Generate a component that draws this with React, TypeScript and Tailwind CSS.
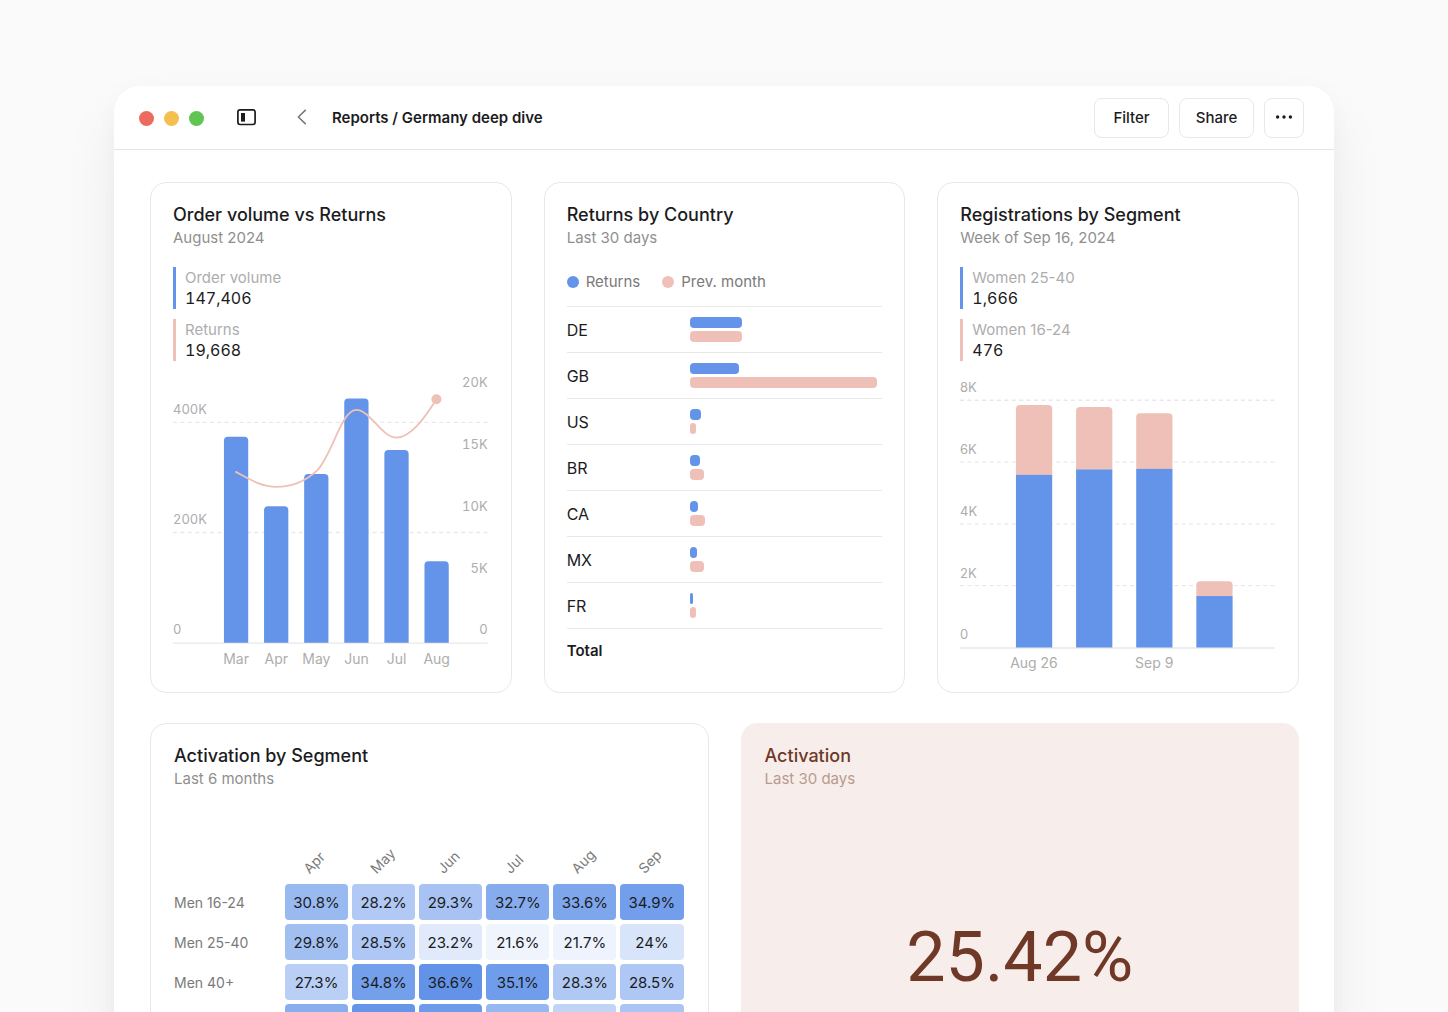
import clsx from 'clsx'
import { PropsWithChildren } from 'react'

const BLUE = '#6494e9'
const PINK = '#eec0b7'

interface ICardProps extends PropsWithChildren {
  title: string
  subtitle: string
  className?: string
  subtitleClassName?: string
}

const Card = ({
  title,
  subtitle,
  className,
  subtitleClassName = 'text-[#8f8f8f]',
  children,
}: ICardProps) => {
  return (
    <section
      className={clsx(
        'flex min-w-0 flex-col rounded-2xl border pt-5',
        className,
      )}
    >
      <h2 className="text-[18px] leading-6 font-medium">{title}</h2>
      <p className={clsx('text-[15px] leading-[22px]', subtitleClassName)}>
        {subtitle}
      </p>
      {children}
    </section>
  )
}

interface IStat {
  label: string
  value: string
  className: string
}

const Stats = ({ items }: { items: IStat[] }) => {
  return (
    <dl className="mt-[18px] flex flex-col gap-2.5">
      {items.map((item) => (
        <div
          key={item.label}
          className={clsx('border-l-[3px] py-px pl-[9px]', item.className)}
        >
          <dt className="text-[15px] leading-5 text-[#adadad]">{item.label}</dt>
          <dd className="text-[16px] leading-5 tabular-nums">{item.value}</dd>
        </div>
      ))}
    </dl>
  )
}

// Bar with rounded top corners, standing on `bottom`
const barPath = (x: number, top: number, width: number, bottom: number) =>
  `M${x} ${bottom}V${top + 4}q0 -4 4 -4h${width - 8}q4 0 4 4V${bottom}z`

const orderBars = [
  { month: 'Mar', top: 66.7 },
  { month: 'Apr', top: 136.3 },
  { month: 'May', top: 104 },
  { month: 'Jun', top: 28.5 },
  { month: 'Jul', top: 80 },
  { month: 'Aug', top: 191.5 },
]

const OrderChart = () => {
  return (
    <svg
      viewBox="0 0 316 300"
      className="mt-[9px] w-full overflow-visible tabular-nums"
      role="img"
      aria-label="Order volume and returns by month"
    >
      <g stroke="#e9e9e9" strokeWidth="1.3">
        <path d="M0 52.5H315M0 162.7H315" strokeDasharray="4 3.4" />
        <path d="M0 273.5H315" />
      </g>
      <g fill="#adadad" fontSize="13">
        <text x="0" y="44">400K</text>
        <text x="0" y="154">200K</text>
        <text x="0" y="264">0</text>
        <g textAnchor="end">
          <text x="315" y="17">20K</text>
          <text x="315" y="79">15K</text>
          <text x="315" y="141">10K</text>
          <text x="315" y="203">5K</text>
          <text x="315" y="264">0</text>
        </g>
      </g>
      {orderBars.map((bar, i) => (
        <g key={bar.month}>
          <path d={barPath(51 + i * 40.15, bar.top, 24.3, 273)} fill={BLUE} />
          <text
            x={63.2 + i * 40.15}
            y="294"
            fontSize="14"
            fill="#adadad"
            textAnchor="middle"
          >
            {bar.month}
          </text>
        </g>
      ))}
      <path
        d="M63 102C76 109 88 117 103.4 117C118 117 132 112 143.5 101.3C159 87 168 40 183.7 40C197 40 209 67.7 223.8 67.7C238 67.7 252 48 263.7 29.3"
        fill="none"
        stroke={PINK}
        strokeWidth="1.8"
        strokeLinecap="round"
      />
      <circle cx="263.7" cy="29.3" r="5" fill={PINK} />
    </svg>
  )
}

const countries = [
  { code: 'DE', returns: 27, previous: 27 },
  { code: 'GB', returns: 25.5, previous: 97 },
  { code: 'US', returns: 6, previous: 3.3 },
  { code: 'BR', returns: 5.3, previous: 7.6 },
  { code: 'CA', returns: 4.3, previous: 7.9 },
  { code: 'MX', returns: 4, previous: 7.6 },
  { code: 'FR', returns: 1.5, previous: 3.3 },
]

const CountryTable = () => {
  return (
    <>
      <ul className="mt-[21px] flex gap-[22px] text-[15px] leading-6 text-[#7a7a7a]">
        <li className="flex items-center gap-[7px]">
          <span className="size-3 rounded-full bg-[#6494e9]" />
          Returns
        </li>
        <li className="flex items-center gap-[7px]">
          <span className="size-3 rounded-full bg-[#eec0b7]" />
          Prev. month
        </li>
      </ul>
      <table className="mt-3 w-full table-fixed text-[16px] leading-6">
        <colgroup>
          <col className="w-[123px]" />
          <col />
        </colgroup>
        <tbody>
          {countries.map((country) => (
            <tr key={country.code} className="h-[46px] border-t border-[#e8e8e8]">
              <th scope="row" className="text-left font-normal">
                {country.code}
              </th>
              <td>
                <div className="flex flex-col gap-[3px]">
                  <div
                    className="h-[11px] rounded bg-[#6494e9]"
                    style={{ width: `${country.returns}%` }}
                  />
                  <div
                    className="h-[11px] rounded bg-[#eec0b7]"
                    style={{ width: `${country.previous}%` }}
                  />
                </div>
              </td>
            </tr>
          ))}
          <tr className="h-11 border-t border-[#e8e8e8]">
            <th scope="row" className="text-left text-[15px] font-semibold">
              Total
            </th>
            <td />
          </tr>
        </tbody>
      </table>
    </>
  )
}

const weeks = [
  { label: 'Aug 26', top: 35, split: 105 },
  { label: '', top: 37, split: 99.5 },
  { label: 'Sep 9', top: 43.3, split: 99 },
  { label: '', top: 211.5, split: 226.3 },
]

const RegistrationsChart = () => {
  return (
    <svg
      viewBox="0 0 316 300"
      className="mt-[9px] w-full overflow-visible"
      role="img"
      aria-label="Registrations by week"
    >
      <g stroke="#e9e9e9" strokeWidth="1.3">
        <path
          d="M0 30.3H315M0 92.2H315M0 154H315M0 215.8H315"
          strokeDasharray="4 3.4"
        />
        <path d="M0 278.3H315" />
      </g>
      <g fill="#adadad" fontSize="13">
        <text x="0" y="22">8K</text>
        <text x="0" y="84">6K</text>
        <text x="0" y="146">4K</text>
        <text x="0" y="208">2K</text>
        <text x="0" y="269">0</text>
      </g>
      {weeks.map((week, i) => (
        <g key={i}>
          <path
            d={barPath(56 + i * 60.2, week.top, 36.3, week.split)}
            fill={PINK}
          />
          <rect
            x={56 + i * 60.2}
            y={week.split}
            width="36.3"
            height={277.8 - week.split}
            fill={BLUE}
          />
          <text
            x={74 + i * 60.2}
            y="298"
            fontSize="14"
            fill="#adadad"
            textAnchor="middle"
          >
            {week.label}
          </text>
        </g>
      ))}
    </svg>
  )
}

const months = ['Apr', 'May', 'Jun', 'Jul', 'Aug', 'Sep']

const segments = [
  { name: 'Men 16-24', values: [30.8, 28.2, 29.3, 32.7, 33.6, 34.9] },
  { name: 'Men 25-40', values: [29.8, 28.5, 23.2, 21.6, 21.7, 24] },
  { name: 'Men 40+', values: [27.3, 34.8, 36.6, 35.1, 28.3, 28.5] },
]

// Row that only peeks in under the fold, drawn without labels
const nextRow = [32.5, 36.3, 35.4, 31.1, 26.6, 28.9]

// Light to dark blue between the lowest and the highest rate
const heatColor = (value: number) => {
  const t = (value - 21.6) / 15
  const r = Math.round(239 - t * 141)
  const g = Math.round(244 - t * 97)
  const b = Math.round(253 - t * 20)
  return `rgb(${r}, ${g}, ${b})`
}

const SegmentHeatmap = () => {
  return (
    <div className="-mr-[3px] -ml-1">
      <table className="w-full table-fixed border-separate border-spacing-1">
        <colgroup>
          <col className="w-[107px]" />
          {months.map((month) => (
            <col key={month} />
          ))}
        </colgroup>
        <thead>
          <tr className="h-[86px]">
            <td />
            {months.map((month) => (
              <th
                key={month}
                scope="col"
                className="pb-0.5 pl-7 text-left align-bottom text-[14px] leading-5 font-normal text-[#7a7a7a]"
              >
                <span className="block w-fit origin-bottom-left -rotate-45">
                  {month}
                </span>
              </th>
            ))}
          </tr>
        </thead>
        <tbody>
          {segments.map((segment) => (
            <tr key={segment.name} className="h-9">
              <th
                scope="row"
                className="pt-0.5 text-left text-[14px] leading-5 font-normal text-[#7a7a7a]"
              >
                {segment.name}
              </th>
              {segment.values.map((value, i) => (
                <td
                  key={months[i]}
                  className="rounded pt-0.5 text-center text-[15px] leading-5"
                  style={{ backgroundColor: heatColor(value) }}
                >
                  {value}%
                </td>
              ))}
            </tr>
          ))}
          <tr className="h-9" aria-hidden="true">
            <td />
            {nextRow.map((value, i) => (
              <td
                key={months[i]}
                className="rounded"
                style={{ backgroundColor: heatColor(value) }}
              />
            ))}
          </tr>
        </tbody>
      </table>
    </div>
  )
}

const buttonClassName =
  'flex h-10 items-center justify-center rounded-lg border border-[#e8e8e8] bg-white text-[15px] font-medium'

const TitleBar = () => {
  return (
    <header className="flex h-16 items-center border-b border-[#e5e5e5] pt-px pr-[30px] pl-[25px]">
      <div className="flex gap-2.5">
        <span className="size-[15px] rounded-full bg-[#ec6a5e]" />
        <span className="size-[15px] rounded-full bg-[#f4bf4f]" />
        <span className="size-[15px] rounded-full bg-[#61c554]" />
      </div>
      <button aria-label="Toggle sidebar" className="mb-0.5 ml-[33px]">
        <svg width="19" height="17" viewBox="0 0 19 17" fill="none">
          <rect
            x="0.9"
            y="0.9"
            width="17.2"
            height="14.6"
            rx="2.2"
            stroke="#1c1c1e"
            strokeWidth="1.7"
          />
          <rect x="4" y="4" width="4" height="8.6" fill="#1c1c1e" />
        </svg>
      </button>
      <button aria-label="Back" className="mb-0.5 ml-[41px]">
        <svg width="10" height="16" viewBox="0 0 10 16" fill="none">
          <path d="M8.7 0.9L1.4 8L8.7 15.1" stroke="#777" strokeWidth="1.5" />
        </svg>
      </button>
      <h1 className="ml-[25px] text-[15px] font-semibold">
        Reports / Germany deep dive
      </h1>
      <div className="ml-auto flex gap-2.5">
        <button className={clsx(buttonClassName, 'w-[75px]')}>Filter</button>
        <button className={clsx(buttonClassName, 'w-[75px]')}>Share</button>
        <button aria-label="More" className={clsx(buttonClassName, 'w-10')}>
          <svg width="18" height="6" viewBox="0 0 18 6" fill="#1c1c1e">
            <circle cx="2.6" cy="2" r="1.7" />
            <circle cx="9" cy="2" r="1.7" />
            <circle cx="15.4" cy="2" r="1.7" />
          </svg>
        </button>
      </div>
    </header>
  )
}

export default function App() {
  return (
    <div className="h-screen overflow-hidden bg-[#fafafa] px-[114px] pt-[86px] font-['Inter',sans-serif] text-[#1c1c1e]">
      <div className="rounded-t-[26px] bg-white shadow-[0_30px_60px_rgba(0,0,0,0.06),0_10px_24px_rgba(0,0,0,0.03)]">
        <TitleBar />
        <main className="flex flex-col gap-[30px] pt-8 pr-[35px] pb-9 pl-9">
          <div className="grid grid-cols-3 gap-8">
            <Card
              title="Order volume vs Returns"
              subtitle="August 2024"
              className="border-[#e8e8e8] px-[22px] pb-[22px]"
            >
              <Stats
                items={[
                  {
                    label: 'Order volume',
                    value: '147,406',
                    className: 'border-[#6494e9]',
                  },
                  {
                    label: 'Returns',
                    value: '19,668',
                    className: 'border-[#eec0b7]',
                  },
                ]}
              />
              <OrderChart />
            </Card>
            <Card
              title="Returns by Country"
              subtitle="Last 30 days"
              className="border-[#e8e8e8] px-[22px]"
            >
              <CountryTable />
            </Card>
            <Card
              title="Registrations by Segment"
              subtitle="Week of Sep 16, 2024"
              className="border-[#e8e8e8] px-[22px] pb-[22px]"
            >
              <Stats
                items={[
                  {
                    label: 'Women 25-40',
                    value: '1,666',
                    className: 'border-[#6494e9]',
                  },
                  {
                    label: 'Women 16-24',
                    value: '476',
                    className: 'border-[#eec0b7]',
                  },
                ]}
              />
              <RegistrationsChart />
            </Card>
          </div>
          <div className="grid min-h-[422px] grid-cols-2 gap-8">
            <Card
              title="Activation by Segment"
              subtitle="Last 6 months"
              className="border-[#e8e8e8] px-[23px] pb-5"
            >
              <SegmentHeatmap />
            </Card>
            <Card
              title="Activation"
              subtitle="Last 30 days"
              className="border-[#f7eeeb] bg-[#f7eeeb] px-[23px] pb-5 text-[#6f3827]"
              subtitleClassName="text-[#b89a91]"
            >
              <p className="flex flex-1 items-center justify-center font-['Roboto',sans-serif] text-[70px] leading-none">
                25.42%
              </p>
            </Card>
          </div>
        </main>
      </div>
    </div>
  )
}
